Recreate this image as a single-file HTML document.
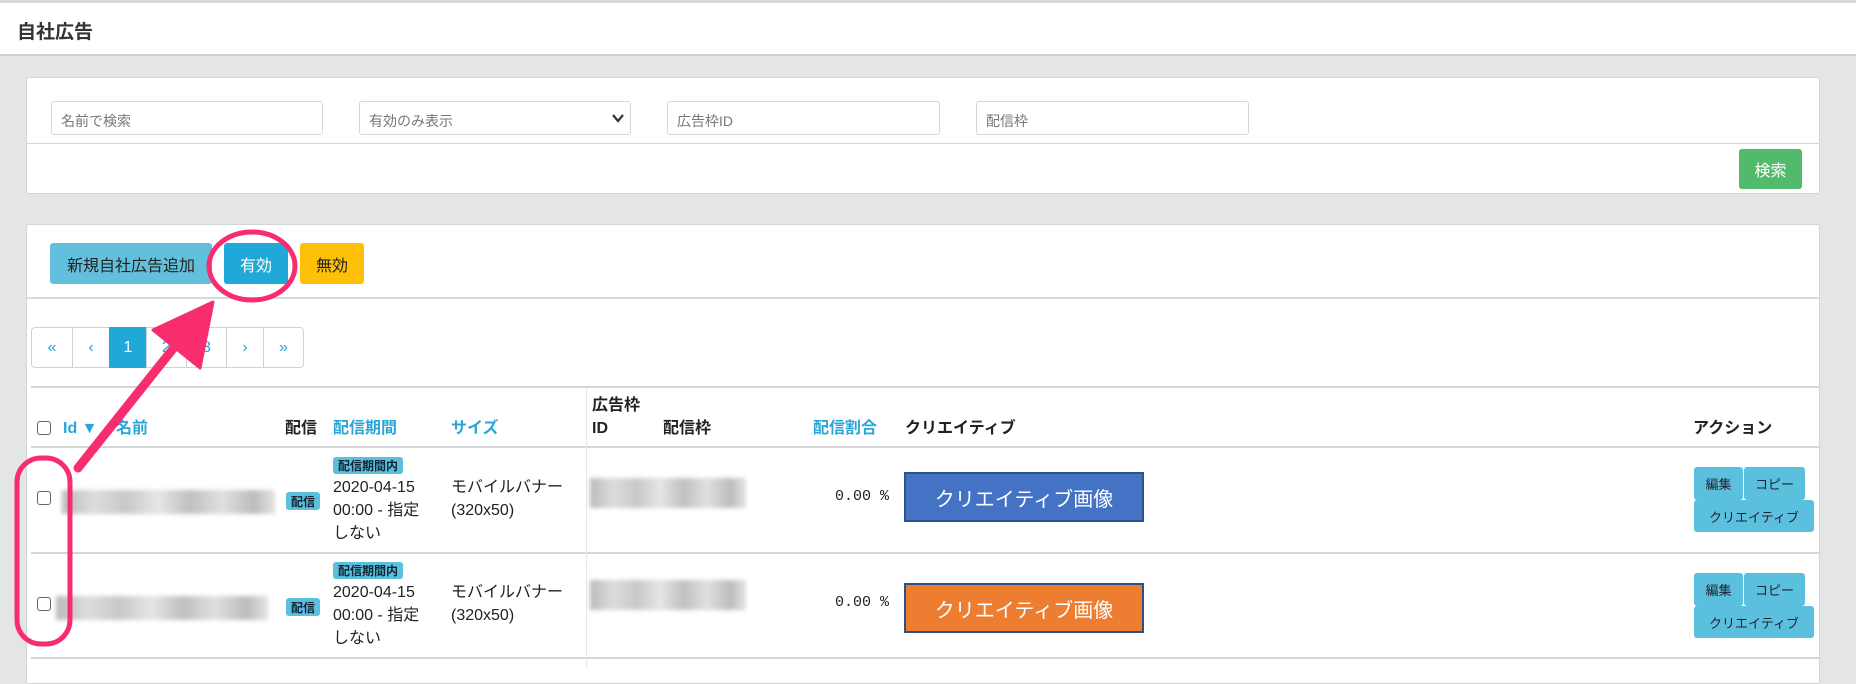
<!DOCTYPE html>
<html><head><meta charset="utf-8"><style>
*{margin:0;padding:0;box-sizing:border-box}
body{width:1856px;height:668px;overflow:hidden;background:#e4e5e7;font-family:"Liberation Sans","Noto Sans CJK JP",sans-serif;color:#222;position:relative}
.a{position:absolute}
.hdr{left:0;top:0;width:1856px;height:56px;background:#fff;border-top:3px solid #d5d7da;border-bottom:2px solid #d0d2d5}
.card{background:#fff;border:1px solid #d3d5d8;border-radius:3px}
.inp{height:34px;border:1px solid #d6d8da;border-radius:3px;font-size:14px;color:#777;padding:9px 9px;background:#fff}
.btn{border-radius:3px;font-size:16px;display:flex;align-items:center;justify-content:center}
.pg{top:327px;height:41px;border:1px solid #cfd3d6;display:flex;align-items:center;justify-content:center;font-size:16px;color:#2ba0d8}
.th{font-size:16px;font-weight:bold;line-height:20px}
.bl{color:#2ba5d8}
.hl{height:2px;background:#d4d7da;left:31px;width:1788px}
.bd{background:#5bc0de;border-radius:3px;font-size:12px;font-weight:bold;color:#123;display:flex;align-items:center;justify-content:center}
.cb{width:14px;height:14px;border:1.5px solid #666;border-radius:3px;background:#fff}
.t{font-size:16px;line-height:23px}
.blur{filter:blur(2px);background:linear-gradient(90deg,#bbb,#ddd 15%,#c8c8c8 30%,#e6e6e6 45%,#c0c0c0 60%,#e0e0e0 75%,#bcbcbc 90%,#e4e4e4)}
.cr{font-size:20px;color:#fff;display:flex;align-items:center;justify-content:center;border:2px solid #2f4f8a}
.ab{background:#5bc0de;border-radius:3px;font-size:13px;color:#223;display:flex;align-items:center;justify-content:center}
</style></head><body>
<div class="a hdr"></div>
<div class="a" style="left:17px;top:17px;font-size:19px;font-weight:bold;color:#333">自社広告</div>
<div class="a" style="left:1825px;top:56px;width:31px;height:612px;background:#e4e5e7"></div>

<div class="a card" style="left:26px;top:77px;width:1794px;height:117px"></div>
<div class="a" style="left:27px;top:143px;width:1792px;height:1px;background:#d3d5d8"></div>
<div class="a inp" style="left:51px;top:101px;width:272px">名前で検索</div>
<div class="a inp" style="left:359px;top:101px;width:272px">有効のみ表示<svg style="position:absolute;right:6px;top:11px" width="12" height="10" viewBox="0 0 12 10"><path d="M1 2 L6 8 L11 2" fill="none" stroke="#333" stroke-width="2.2"/></svg></div>
<div class="a inp" style="left:667px;top:101px;width:273px">広告枠ID</div>
<div class="a inp" style="left:976px;top:101px;width:273px">配信枠</div>
<div class="a btn" style="left:1739px;top:149px;width:63px;height:40px;background:#52bb6b;color:#fff">検索</div>

<div class="a card" style="left:26px;top:224px;width:1794px;height:460px"></div>
<div class="a" style="left:27px;top:297px;width:1792px;height:2px;background:#d8dadd"></div>
<div class="a btn" style="left:50px;top:243px;width:162px;height:41px;background:#62c0dc;color:#222">新規自社広告追加</div>
<div class="a btn" style="left:224px;top:243px;width:64px;height:41px;background:#20a8d8;color:#fff">有効</div>
<div class="a btn" style="left:300px;top:243px;width:64px;height:41px;background:#ffc107;color:#222">無効</div>

<div class="a pg" style="left:31px;width:42px;border-radius:4px 0 0 4px">«</div>
<div class="a pg" style="left:72px;width:38px">‹</div>
<div class="a pg" style="left:109px;width:38px;background:#20a8d8;color:#fff;border-color:#20a8d8">1</div>
<div class="a pg" style="left:146px;width:41px">2</div>
<div class="a pg" style="left:186px;width:41px">3</div>
<div class="a pg" style="left:226px;width:38px">›</div>
<div class="a pg" style="left:263px;width:41px;border-radius:0 4px 4px 0">»</div>

<div class="a hl" style="top:386px"></div>
<div class="a hl" style="top:446px"></div>
<div class="a hl" style="top:552px"></div>
<div class="a hl" style="top:657px"></div>
<div class="a" style="left:586px;top:388px;width:1px;height:280px;background:#e8e8e8"></div>

<div class="a cb" style="left:37px;top:421px"></div>
<div class="a th bl" style="left:63px;top:419px">Id ▼</div>
<div class="a th bl" style="left:116px;top:419px">名前</div>
<div class="a th" style="left:285px;top:419px">配信</div>
<div class="a th bl" style="left:333px;top:419px">配信期間</div>
<div class="a th bl" style="left:451px;top:419px">サイズ</div>
<div class="a th" style="left:592px;top:396px">広告枠</div>
<div class="a th" style="left:592px;top:419px">ID</div>
<div class="a th" style="left:663px;top:419px">配信枠</div>
<div class="a th bl" style="left:813px;top:419px">配信割合</div>
<div class="a th" style="left:905px;top:419px">クリエイティブ</div>
<div class="a th" style="left:1693px;top:419px">アクション</div>

<!-- row1 -->
<div class="a cb" style="left:37px;top:491px"></div>
<div class="a blur" style="left:62px;top:490px;width:213px;height:24px"></div>
<div class="a bd" style="left:286px;top:492px;width:34px;height:18px">配信</div>
<div class="a bd" style="left:333px;top:457px;width:70px;height:17px">配信期間内</div>
<div class="a t" style="left:333px;top:476px">2020-04-15<br>00:00 - 指定<br>しない</div>
<div class="a t" style="left:451px;top:476px">モバイルバナー<br>(320x50)</div>
<div class="a blur" style="left:590px;top:478px;width:156px;height:30px"></div>
<div class="a" style="left:835px;top:488px;font-family:'Liberation Mono',monospace;font-size:15px">0.00 %</div>
<div class="a cr" style="left:904px;top:472px;width:240px;height:50px;background:#4472c4">クリエイティブ画像</div>
<div class="a ab" style="left:1694px;top:467px;width:49px;height:33px">編集</div>
<div class="a ab" style="left:1744px;top:467px;width:61px;height:33px">コピー</div>
<div class="a ab" style="left:1694px;top:500px;width:120px;height:32px">クリエイティブ</div>

<!-- row2 -->
<div class="a cb" style="left:37px;top:597px"></div>
<div class="a blur" style="left:56px;top:596px;width:212px;height:24px"></div>
<div class="a bd" style="left:286px;top:598px;width:34px;height:18px">配信</div>
<div class="a bd" style="left:333px;top:562px;width:70px;height:17px">配信期間内</div>
<div class="a t" style="left:333px;top:581px">2020-04-15<br>00:00 - 指定<br>しない</div>
<div class="a t" style="left:451px;top:581px">モバイルバナー<br>(320x50)</div>
<div class="a blur" style="left:590px;top:580px;width:156px;height:30px"></div>
<div class="a" style="left:835px;top:594px;font-family:'Liberation Mono',monospace;font-size:15px">0.00 %</div>
<div class="a cr" style="left:904px;top:583px;width:240px;height:50px;background:#ed7d31">クリエイティブ画像</div>
<div class="a ab" style="left:1694px;top:573px;width:49px;height:33px">編集</div>
<div class="a ab" style="left:1744px;top:573px;width:61px;height:33px">コピー</div>
<div class="a ab" style="left:1694px;top:606px;width:120px;height:32px">クリエイティブ</div>

<svg class="a" style="left:0;top:0" width="1856" height="668">
<ellipse cx="252" cy="266" rx="43" ry="34" fill="none" stroke="#f72d6e" stroke-width="5"/>
<rect x="17" y="458" width="53" height="186" rx="24" fill="none" stroke="#f72d6e" stroke-width="5"/>
<line x1="78" y1="468" x2="180" y2="340" stroke="#f72d6e" stroke-width="9" stroke-linecap="round"/>
<polygon points="213,302 153,330 200,368" fill="#f72d6e" stroke="#f72d6e" stroke-width="3" stroke-linejoin="round"/>
</svg>
</body></html>
